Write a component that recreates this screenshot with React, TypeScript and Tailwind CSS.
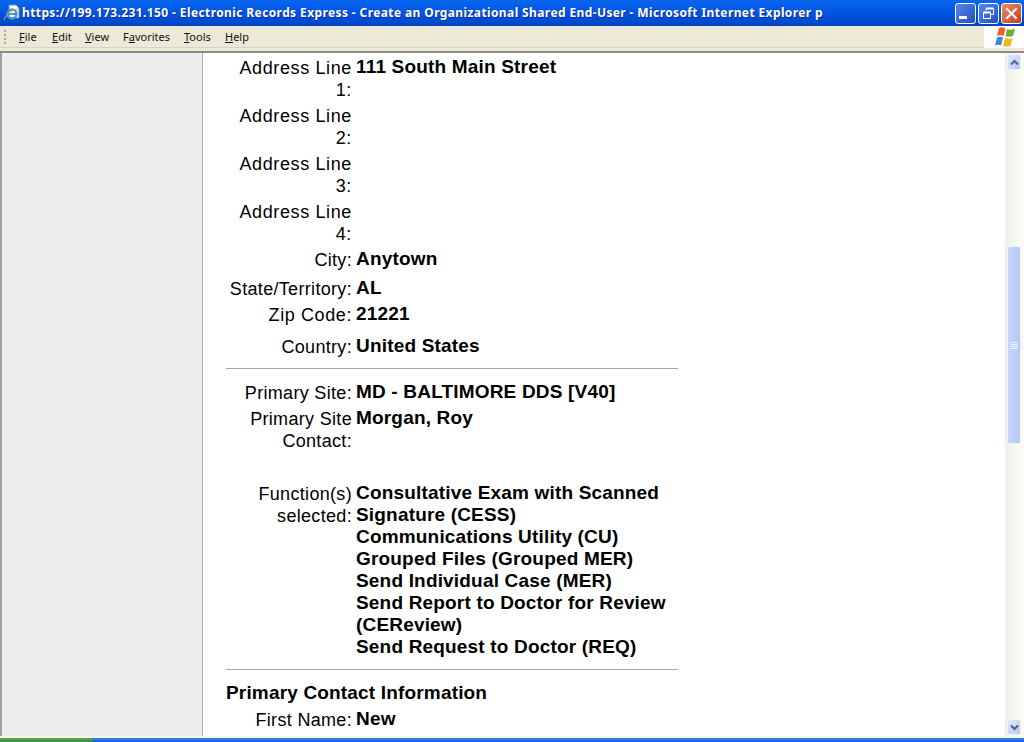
import React from "react";

function Row({ label, value, labelClass = "tracking-[0.32px]", className = "" }: { label: React.ReactNode; value: React.ReactNode; labelClass?: string; className?: string }) {
  return (
    <div className={`flex ${className}`}>
      <div className={`w-[126px] shrink-0 text-right text-[18px] ${labelClass}`}>{label}</div>
      <div className="ml-[4px] -mt-[1px] font-bold tracking-[0.18px]">{value}</div>
    </div>
  );
}

const Menu = ({ pre = "", u, post, w }: { pre?: string; u: string; post: string; w: string }) => (
  <span className={`${w} shrink-0`}>
    {pre}
    <span className="underline">{u}</span>
    {post}
  </span>
);

function CapBtn({ children, cls }: { children: React.ReactNode; cls: string }) {
  return (
    <div className={`w-[21px] h-[21px] rounded-[3px] border border-white flex items-center justify-center ${cls}`}>
      {children}
    </div>
  );
}

const addr = "tracking-[0.62px]";

export default function App() {
  return (
    <div className="w-[1024px] h-[742px] overflow-hidden flex flex-col bg-white text-black font-['Liberation_Sans',Arial,sans-serif]">
      {/* title bar */}
      <div className="h-[26px] shrink-0 flex items-center bg-gradient-to-b from-[#0a66ee] via-[#0054e3] to-[#0044c0] pl-[3px] pr-[2px]">
        <svg width="18" height="18" viewBox="0 0 18 18" className="shrink-0">
          <path d="M6 1h7l3 3v10H6z" fill="#fff" stroke="#7a8aa8" strokeWidth="1" />
          <circle cx="9" cy="10" r="4.500" fill="none" stroke="#3a9be0" strokeWidth="2.400" />
          <path d="M5 10h8" stroke="#1f6fc8" strokeWidth="1.500" />
          <path d="M1 16C3 10 10 5 16 5" fill="none" stroke="#e8a820" strokeWidth="1" />
        </svg>
        <div className="ml-[1px] text-white font-bold text-[12px] tracking-[0.39px] whitespace-nowrap font-['Noto_Sans',sans-serif] [text-shadow:1px_1px_0_#0a2f9c]">
          https://199.173.231.150 - Electronic Records Express - Create an Organizational Shared End-User - Microsoft Internet Explorer p
        </div>
        <div className="ml-auto flex gap-[2px]">
          <CapBtn cls="bg-gradient-to-br from-[#5a86e8] to-[#1f4fc8]">
            <div className="w-[8px] h-[3px] bg-white mt-[9px] mr-[5px]" />
          </CapBtn>
          <CapBtn cls="bg-gradient-to-br from-[#5a86e8] to-[#1f4fc8]">
            <svg width="13" height="13" viewBox="0 0 13 13" fill="none" stroke="#fff">
              <path d="M4 3.500V1.500h7.500v6H9" strokeWidth="1" />
              <path d="M4 1.500h7.500" strokeWidth="2" />
              <rect x="1.500" y="5.500" width="7" height="6" strokeWidth="1" />
              <path d="M1.500 5.500h7" strokeWidth="2" />
            </svg>
          </CapBtn>
          <CapBtn cls="bg-gradient-to-br from-[#e98a6a] to-[#c8391a]">
            <svg width="13" height="13" viewBox="0 0 13 13" stroke="#fff" strokeWidth="2" strokeLinecap="square">
              <path d="M2 2l9 9M11 2l-9 9" />
            </svg>
          </CapBtn>
        </div>
      </div>
      {/* menu bar */}
      <div className="h-[22px] shrink-0 flex bg-[#ece9d8]">
        <div className="relative flex-1 flex items-center pl-[19px] pt-[2px] text-[11px] text-[#111] border-b border-[#d8d4c0] font-['Noto_Sans',sans-serif]">
          <div className="absolute left-[4px] top-[4px] w-[2px] h-[14px] border-l-2 border-dotted border-[#a8a490]" />
          <Menu u="F" post="ile" w="w-[33px]" />
          <Menu u="E" post="dit" w="w-[33px]" />
          <Menu u="V" post="iew" w="w-[38px]" />
          <Menu pre="F" u="a" post="vorites" w="w-[61px]" />
          <Menu u="T" post="ools" w="w-[41px]" />
          <Menu u="H" post="elp" w="w-[30px]" />
        </div>
        <div className="w-[40px] shrink-0 bg-white flex items-center justify-center pl-[2px]">
          <svg width="21" height="20" viewBox="0 0 21 20">
            <path d="M4 1C6 0 8 0 10.500 1.500L8.500 9C6.500 8 4 8 2 9z" fill="#e8602a" />
            <path d="M12 2C14 3 17 3 20 1.500L18 9C15.500 10 13 10 10.500 9z" fill="#6cb030" />
            <path d="M2 10.500C4 9.500 6 9.500 8 10.500L6 18.500C4 17.500 2 17.500 0 18.500z" fill="#3a8ad8" />
            <path d="M10 11C12.500 12 15 12 17.500 11L15.500 19C13 20 10.500 20 8 19z" fill="#f0b820" />
          </svg>
        </div>
      </div>
      <div className="h-[3px] shrink-0 bg-[#ece9d8]" />
      <div className="h-[2px] shrink-0 bg-[#8f8c7c]" />
      {/* body */}
      <div className="flex-1 min-h-0 flex bg-white">
        <div className="w-[203px] shrink-0 bg-[#eeeeee] border-r border-[#aaaaaa] border-l-2 border-l-[#a0a0a0]" />
        <div className="flex-1 min-w-0 overflow-hidden pl-[23px] pt-[4px] text-[19px] leading-[22px]">
          <div className="w-[452px]">
            <Row label="Address Line 1:" labelClass={addr} value="111 South Main Street" />
            <Row label="Address Line 2:" labelClass={addr} value="" className="mt-[4px]" />
            <Row label="Address Line 3:" labelClass={addr} value="" className="mt-[4px]" />
            <Row label="Address Line 4:" labelClass={addr} value="" className="mt-[4px]" />
            <Row label="City:" value="Anytown" className="mt-[4px]" />
            <Row label="State/Territory:" value="AL" className="mt-[7px]" />
            <Row label="Zip Code:" labelClass="tracking-[0.6px]" value="21221" className="mt-[4px]" />
            <Row label="Country:" value="United States" className="mt-[10px]" />
            <div className="h-[1px] mt-[10px] bg-[#aca899]" />
            <Row label="Primary Site:" value="MD - BALTIMORE DDS [V40]" className="mt-[13px]" />
            <Row label="Primary Site Contact:" value="Morgan, Roy" className="mt-[4px]" />
            <Row
              className="mt-[31px]"
              label="Function(s) selected:"
              value={
                <>
                  <div>Consultative Exam with Scanned Signature (CESS)</div>
                  <div>Communications Utility (CU)</div>
                  <div>Grouped Files (Grouped MER)</div>
                  <div>Send Individual Case (MER)</div>
                  <div>Send Report to Doctor for Review (CEReview)</div>
                  <div>Send Request to Doctor (REQ)</div>
                </>
              }
            />
            <div className="h-[1px] mt-[11px] bg-[#aca899]" />
            <div className="mt-[12px] font-bold tracking-[0.17px]">Primary Contact Information</div>
            <Row label="First Name:" value="New" className="mt-[5px]" />
          </div>
        </div>
        {/* scrollbar */}
        <div className="w-[19px] shrink-0 flex flex-col pl-[2px] pt-[1px] bg-gradient-to-r from-[#f1efe6] to-[#fbfaf6] border-r-[3px] border-r-[#fbfaf3]">
          <div className="h-[16px] shrink-0 rounded-[2px] border border-[#eef2fc] bg-gradient-to-br from-[#e2ebfd] to-[#b4c8f6] flex items-center justify-center">
            <svg width="9" height="7" viewBox="0 0 9 7" fill="none" stroke="#4d6185" strokeWidth="2">
              <path d="M1 5.500l3.500-3.500 3.500 3.500" />
            </svg>
          </div>
          <div className="h-[176px] shrink-0" />
          <div className="h-[198px] shrink-0 rounded-[2px] border border-[#eef2fc] bg-gradient-to-r from-[#c8d6fb] to-[#b4c8f6] flex flex-col items-center justify-center gap-[1px]">
            <div className="w-[7px] h-[1px] bg-[#eef2fe]" />
            <div className="w-[7px] h-[1px] bg-[#eef2fe]" />
            <div className="w-[7px] h-[1px] bg-[#eef2fe]" />
            <div className="w-[7px] h-[1px] bg-[#eef2fe]" />
          </div>
          <div className="flex-1" />
          <div className="h-[16px] shrink-0 mb-[1px] rounded-[2px] border border-[#eef2fc] bg-gradient-to-br from-[#e2ebfd] to-[#b4c8f6] flex items-center justify-center">
            <svg width="9" height="7" viewBox="0 0 9 7" fill="none" stroke="#4d6185" strokeWidth="2">
              <path d="M1 1.500l3.500 3.500 3.500-3.500" />
            </svg>
          </div>
        </div>
      </div>
      <div className="h-[2px] shrink-0 bg-[#f5f3e6]" />
      {/* taskbar */}
      <div className="h-[4px] shrink-0 flex bg-gradient-to-b from-[#2f8ae8] to-[#1a64d8]">
        <div className="w-[93px] bg-gradient-to-b from-[#5fa85f] to-[#3a8a3a] rounded-tr-[4px]" />
      </div>
    </div>
  );
}
